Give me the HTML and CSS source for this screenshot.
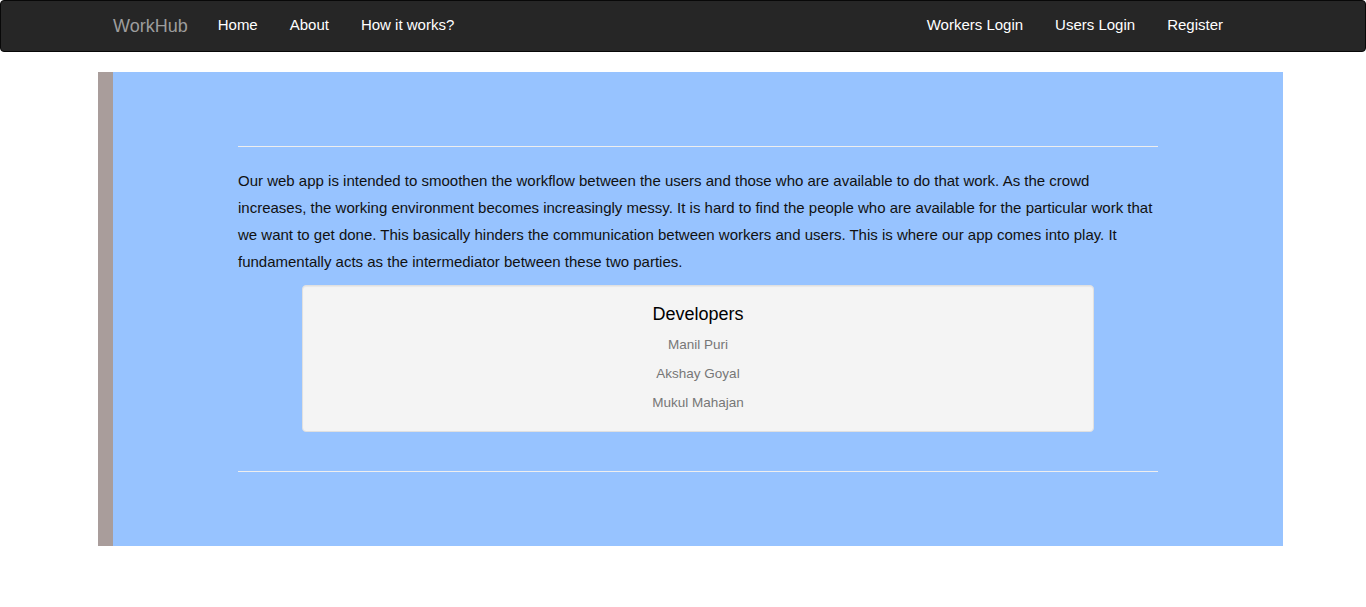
FILE: index.html
```html
<!DOCTYPE html>
<html lang="en">
<head>
<meta charset="utf-8">
<title>WorkHub</title>
<link rel="stylesheet" href="styles.css">
</head>
<body>
<nav class="navbar">
  <div class="nav-inner">
    <a class="brand" href="#">WorkHub</a>
    <ul class="nav">
      <li><a href="#">Home</a></li>
      <li><a href="#">About</a></li>
      <li><a href="#">How it works?</a></li>
    </ul>
    <ul class="nav nav-right">
      <li><a href="#">Workers Login</a></li>
      <li><a href="#">Users Login</a></li>
      <li><a href="#">Register</a></li>
    </ul>
  </div>
</nav>
<div class="page">
  <section class="hero">
    <hr class="rule">
    <p class="intro">Our web app is intended to smoothen the workflow between the users and those who are available to do that work. As the crowd increases, the working environment becomes increasingly messy. It is hard to find the people who are available for the particular work that we want to get done. This basically hinders the communication between workers and users. This is where our app comes into play. It fundamentally acts as the intermediator between these two parties.</p>
    <div class="well">
      <h4 class="well-title">Developers</h4>
      <div class="dev">Manil Puri</div>
      <div class="dev">Akshay Goyal</div>
      <div class="dev">Mukul Mahajan</div>
    </div>
    <hr class="rule rule-bottom">
  </section>
</div>
</body>
</html>
```

FILE: styles.css
```css
* { box-sizing: border-box; }
html, body { margin: 0; padding: 0; background: #fff; }
body {
  font-family: "Liberation Sans", Arial, sans-serif;
  font-size: 14px;
  color: #333;
}
a { text-decoration: none; }

.navbar {
  background: #262626;
  border: 1px solid #080808;
  border-radius: 4px;
  margin-bottom: 20px;
}
.nav-inner {
  width: 1170px;
  height: 50px;
  margin: 0 auto;
  display: flex;
  align-items: stretch;
}
.brand {
  padding: 15px 14px 15px 15px;
  font-size: 18px;
  line-height: 20px;
  color: #9d9d9d;
}
.nav {
  list-style: none;
  margin: 0;
  padding: 0;
  display: flex;
}
.nav a {
  display: block;
  padding: 14px 16px 16px;
  font-size: 15px;
  line-height: 20px;
  color: #fff;
}
.nav-right { margin-left: auto; margin-right: 29px; }

.page { width: 1170px; margin: 0 auto; }
.hero {
  width: 1185px;
  border-left: 15px solid #a99d9b;
  background: #97c3ff;
  padding: 74px 125px 74px;
}
.rule {
  margin: 0;
  border: 0;
  border-top: 1px solid #eee;
  height: 0;
}
.rule-bottom { margin-top: 39px; }
.intro {
  margin: 20px 0 10px;
  font-size: 15px;
  line-height: 27px;
  color: #111;
}
.well {
  width: 792px;
  margin: 0 auto;
  padding: 19px;
  background: #f4f4f4;
  border: 1px solid #e0e0e0;
  border-radius: 4px;
  box-shadow: inset 0 1px 1px rgba(0,0,0,.05);
  text-align: center;
}
.well-title {
  margin: 0;
  font-size: 18px;
  font-weight: 500;
  line-height: 19.8px;
  color: #000;
}
.dev {
  margin-top: 10px;
  font-size: 13.5px;
  line-height: 19px;
  color: #777;
}
```
